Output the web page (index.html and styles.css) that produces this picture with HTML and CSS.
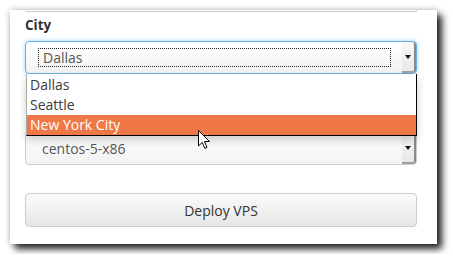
FILE: index.html
```html
<!DOCTYPE html>
<html lang="en">
<head>
    <meta charset="UTF-8">
    <meta name="viewport" content="width=device-width, initial-scale=1.0">
    <title>Deploy VPS</title>
    <link rel="stylesheet" href="styles.css">
</head>
<body>
    <div class="panel">
        <div class="prev-input"></div>

        <div class="form-group">
            <label class="label">City</label>
            <div class="select focused">
                <span class="focus-ring">Dallas</span>
                <span class="arrow-btn"><span class="arrow"></span></span>
            </div>
            <ul class="dropdown">
                <li>Dallas</li>
                <li>Seattle</li>
                <li class="active">New York City</li>
            </ul>
        </div>

        <div class="form-group second">
            <div class="select">
                <span class="value">centos-5-x86</span>
                <span class="arrow-btn"><span class="arrow"></span></span>
            </div>
        </div>

        <button class="deploy" type="button">Deploy VPS</button>
    </div>

    <!-- mouse pointer -->
    <svg class="cursor" width="13" height="20" viewBox="0 0 13 20">
        <path d="M0.5 0.5 L0.5 16 L4.2 12.4 L6.8 18.4 L9 17.4 L6.5 11.5 L11.5 11.5 Z" fill="#fff" stroke="#000" stroke-width="1" stroke-linejoin="miter"/>
    </svg>
</body>
</html>
```

FILE: styles.css
```css
body {
    margin: 0;
    padding: 10px;
    background-color: #ffffff;
    font-family: "Open Sans", "Noto Sans", sans-serif;
    color: #333333;
}

.panel {
    position: relative;
    width: 427px;
    height: 234px;
    box-sizing: border-box;
    padding: 0 20px 0 15px;
    background-color: #ffffff;
    box-shadow: 5px 5px 7px rgba(0, 0, 0, 0.85), 0 0 6px rgba(0, 0, 0, 0.25);
}

/* bottom edge of the field above, scrolled off */
.prev-input {
    height: 1px;
    border: 1px solid #cccccc;
    border-top: none;
    border-radius: 0 0 4px 4px;
}

.form-group {
    position: relative;
}

.label {
    display: block;
    margin-top: 3px;
    margin-bottom: 6px;
    font-size: 13.5px;
    font-weight: bold;
    line-height: 20px;
    color: #333333;
}

.select {
    position: relative;
    display: flex;
    align-items: center;
    height: 33px;
    box-sizing: border-box;
    border: 1px solid #cccccc;
    border-radius: 4px;
    background: linear-gradient(#ffffff, #f2f2f2);
    font-size: 14px;
    color: #555555;
}

.select.focused {
    border-color: #66afe9;
    box-shadow: 0 0 4px rgba(102, 175, 233, 0.6);
}

.focus-ring {
    display: block;
    margin-left: 12px;
    width: 353px;
    height: 19px;
    box-sizing: border-box;
    border: 1px dotted #222222;
    padding-left: 4px;
    line-height: 17px;
}

.value {
    margin-left: 16px;
    line-height: 19px;
}

.arrow-btn {
    position: absolute;
    top: 0;
    right: 0;
    bottom: 0;
    width: 12px;
    display: flex;
    align-items: center;
    justify-content: center;
    background: linear-gradient(#f8f8f8, #e8e8e8);
    border-right: 2px solid #8a8a8a;
    border-bottom: 2px solid #a0a0a0;
    border-radius: 0 3px 3px 0;
}

.arrow {
    width: 0;
    height: 0;
    border-left: 3px solid transparent;
    border-right: 3px solid transparent;
    border-top: 4px solid #111111;
}

.dropdown {
    position: absolute;
    top: 100%;
    left: 1px;
    right: 0;
    z-index: 2;
    margin: 0;
    padding: 1px 0 0;
    list-style: none;
    background-color: #ffffff;
    border-left: 1px solid #a8a8a8;
    border-right: 1px solid #000000;
    border-bottom: 1px solid #000000;
    box-shadow: 0 4px 8px rgba(0, 0, 0, 0.2);
    font-size: 14px;
    color: #3c3c3c;
}

.dropdown li {
    height: 20px;
    line-height: 20px;
    padding-left: 3px;
}

.dropdown li.active {
    background-color: #f07746;
    color: #ffffff;
}

.second {
    margin-top: 58px;
}

.deploy {
    display: block;
    width: 100%;
    height: 34px;
    margin-top: 28px;
    border: 1px solid #cccccc;
    border-radius: 4px;
    background: linear-gradient(#fbfbfb, #e6e6e6);
    font-family: "Open Sans", "Noto Sans", sans-serif;
    font-size: 14px;
    color: #333333;
}

.cursor {
    position: absolute;
    left: 198px;
    top: 130px;
    z-index: 5;
}
```
